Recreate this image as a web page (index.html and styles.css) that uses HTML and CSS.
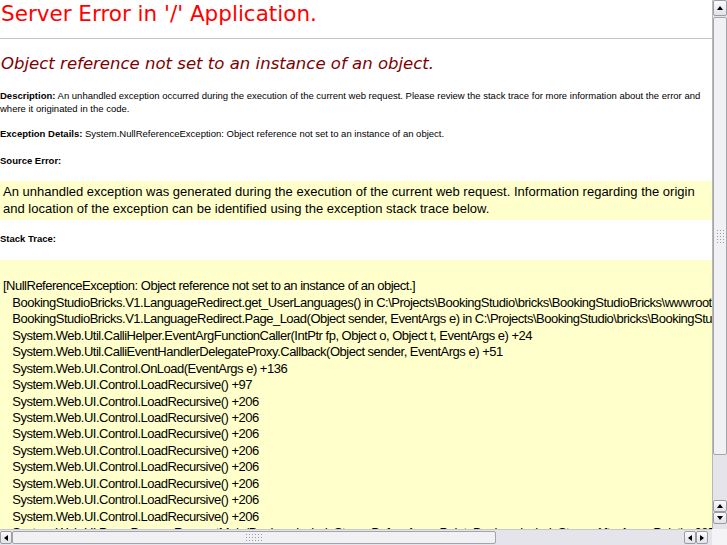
FILE: index.html
```
<!DOCTYPE html>
<html>
<head>
<meta charset="utf-8">
<title>Object reference not set to an instance of an object.</title>
<link rel="stylesheet" href="styles.css">
</head>
<body>
<div class="viewport">
  <div class="page">
    <h1 class="title">Server Error in '/' Application.</h1>
    <div class="rule"></div>
    <h2 class="subtitle">Object reference not set to an instance of an object.</h2>
    <p class="info desc"><b>Description:</b> An unhandled exception occurred during the execution of the current web request. Please review the stack trace for more information about the error and where it originated in the code.</p>
    <p class="info details"><b>Exception Details:</b> System.NullReferenceException: Object reference not set to an instance of an object.</p>
    <p class="info source"><b>Source Error:</b></p>
    <div class="box box-source">An unhandled exception was generated during the execution of the current web request. Information regarding the origin and location of the exception can be identified using the exception stack trace below.</div>
    <p class="info stack"><b>Stack Trace:</b></p>
    <div class="box box-stack"><pre class="trace">

[NullReferenceException: Object reference not set to an instance of an object.]
   BookingStudioBricks.V1.LanguageRedirect.get_UserLanguages() in C:\Projects\BookingStudio\bricks\BookingStudioBricks\wwwroot\V1\LanguageRedirect.aspx.cs:41
   BookingStudioBricks.V1.LanguageRedirect.Page_Load(Object sender, EventArgs e) in C:\Projects\BookingStudio\bricks\BookingStudioBricks\wwwroot\V1\LanguageRedirect.aspx.cs:17
   System.Web.Util.CalliHelper.EventArgFunctionCaller(IntPtr fp, Object o, Object t, EventArgs e) +24
   System.Web.Util.CalliEventHandlerDelegateProxy.Callback(Object sender, EventArgs e) +51
   System.Web.UI.Control.OnLoad(EventArgs e) +136
   System.Web.UI.Control.LoadRecursive() +97
   System.Web.UI.Control.LoadRecursive() +206
   System.Web.UI.Control.LoadRecursive() +206
   System.Web.UI.Control.LoadRecursive() +206
   System.Web.UI.Control.LoadRecursive() +206
   System.Web.UI.Control.LoadRecursive() +206
   System.Web.UI.Control.LoadRecursive() +206
   System.Web.UI.Control.LoadRecursive() +206
   System.Web.UI.Control.LoadRecursive() +206
   System.Web.UI.Page.ProcessRequestMain(Boolean includeStagesBeforeAsyncPoint, Boolean includeStagesAfterAsyncPoint) +2852
</pre></div>
  </div>

  <div class="vscroll">
    <div class="btn btn-v btn-top"><span class="tri tri-up"></span></div>
    <div class="thumb thumb-v"><span class="grip grip-v"></span></div>
    <div class="track-fill"></div>
    <div class="btn btn-v btn-small"><span class="tri tri-up"></span></div>
    <div class="btn btn-v btn-small btn-last"><span class="tri tri-down"></span></div>
  </div>

  <div class="hscroll">
    <div class="btn btn-h"><span class="tri tri-left"></span></div>
    <div class="thumb thumb-h"><span class="grip grip-h"></span></div>
    <div class="track-fill"></div>
    <div class="btn btn-h"><span class="tri tri-left"></span></div>
    <div class="btn btn-h"><span class="tri tri-right"></span></div>
    <div class="hgap"></div>
  </div>

  <div class="corner"></div>
</div>
</body>
</html>
```

FILE: styles.css
```
html, body {
  margin: 0;
  padding: 0;
  background: #ffffff;
}

.viewport {
  width: 727px;
  height: 545px;
  display: grid;
  grid-template-columns: 712px 15px;
  grid-template-rows: 529px 16px;
  overflow: hidden;
}

.page {
  overflow: hidden;
  background: #ffffff;
  font-family: "Liberation Sans", Arial, sans-serif;
  color: #000;
}

.title {
  margin: 0 0 12px 0;
  padding: 1px 0 0 1px;
  font-family: "DejaVu Sans", Verdana, sans-serif;
  font-weight: normal;
  font-size: 21.5px;
  line-height: 25px;
  color: #ff0000;
  white-space: nowrap;
}

.rule {
  height: 0;
  border-top: 1px solid #c4c4c4;
}

.subtitle {
  margin: 15px 0 0 0;
  padding-left: 1px;
  font-family: "DejaVu Sans", Verdana, sans-serif;
  font-weight: normal;
  font-style: italic;
  font-size: 16.55px;
  line-height: 19px;
  color: #800000;
  white-space: nowrap;
}

.info {
  margin: 0;
  font-size: 9.5px;
  line-height: 13px;
  color: #000;
}

.info b {
  font-weight: bold;
}

.desc { margin-top: 16px; padding-right: 4px; }
.details { margin-top: 12px; }
.source { margin-top: 14px; }
.stack { margin-top: 12px; }

.box {
  background: #ffffcc;
  font-size: 13px;
  color: #000;
}

.box-source {
  margin-top: 13.5px;
  padding: 2px 10px 3px 3px;
  line-height: 17px;
}

.box-stack {
  margin-top: 15px;
  padding: 2.4px 0 0 3px;
  height: 300px;
}

.trace {
  margin: 0;
  font-family: "Liberation Sans", Arial, sans-serif;
  font-size: 13px;
  letter-spacing: -0.5px;
  line-height: 16.45px;
  white-space: pre;
}

/* fake GTK scrollbars */
.vscroll {
  display: flex;
  flex-direction: column;
  background: #e4e4ea;
  border-left: 1px solid #b8b8bc;
  box-sizing: border-box;
}

.hscroll {
  display: flex;
  flex-direction: row;
  align-items: stretch;
  background: #e4e4ea;
  border-top: 1px solid #c8c8cc;
  box-sizing: border-box;
}

.corner {
  background: #f4f4f6;
}

.track-fill {
  flex: 1;
}

.btn {
  box-sizing: border-box;
  border: 1px solid #9c9ca4;
  border-radius: 2px;
  background: linear-gradient(#fbfbfc, #e2e2e8);
  display: flex;
  align-items: center;
  justify-content: center;
}

.btn-v { width: 14px; }
.btn-top { height: 16px; }
.btn-small { height: 12px; }
.btn-last { margin-bottom: 5px; }

.btn-h { width: 12px; margin: 1px 0; }
.hgap { width: 4px; }

.thumb {
  box-sizing: border-box;
  border: 1px solid #a4a4ac;
  border-radius: 2px;
  background: #f1f1f4;
  display: flex;
  align-items: center;
  justify-content: center;
}

.thumb-v {
  width: 14px;
  height: 438px;
  margin-top: 1px;
}

.thumb-h {
  width: 484px;
  margin: 1px 0;
}

.grip {
  display: block;
  background-image: radial-gradient(circle, #9a9aa2 0.8px, transparent 1px);
  background-size: 3px 3px;
}

.grip-v { width: 9px; height: 15px; }
.grip-h { width: 18px; height: 9px; }

.tri {
  width: 0;
  height: 0;
  display: block;
}

.tri-up {
  border-left: 3px solid transparent;
  border-right: 3px solid transparent;
  border-bottom: 4px solid #000;
}

.tri-down {
  border-left: 3px solid transparent;
  border-right: 3px solid transparent;
  border-top: 4px solid #000;
}

.tri-left {
  border-top: 3px solid transparent;
  border-bottom: 3px solid transparent;
  border-right: 4px solid #000;
}

.tri-right {
  border-top: 3px solid transparent;
  border-bottom: 3px solid transparent;
  border-left: 4px solid #000;
}
```
